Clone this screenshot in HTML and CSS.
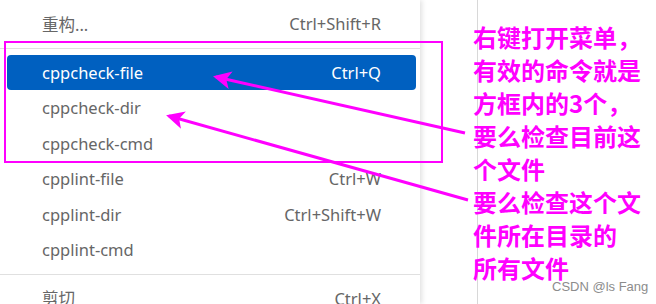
FILE: index.html
```html
<!DOCTYPE html>
<html lang="zh-CN">
<head>
    <meta charset="UTF-8">
    <title>右键菜单</title>
    <link rel="stylesheet" href="styles.css">
</head>
<body>
    <div class="page">
        <div class="menu">
            <div class="item"><span>重构...</span><span class="key">Ctrl+Shift+R</span></div>
            <div class="sep"></div>
            <div class="item active"><span>cppcheck-file</span><span class="key">Ctrl+Q</span></div>
            <div class="item"><span>cppcheck-dir</span></div>
            <div class="item"><span>cppcheck-cmd</span></div>
            <div class="item"><span>cpplint-file</span><span class="key">Ctrl+W</span></div>
            <div class="item"><span>cpplint-dir</span><span class="key">Ctrl+Shift+W</span></div>
            <div class="item"><span>cpplint-cmd</span></div>
            <div class="sep"></div>
            <div class="item"><span>剪切</span><span class="key">Ctrl+X</span></div>
        </div>
        <div class="gutter"></div>
        <div class="editor"></div>
    </div>

    <!-- annotation drawn over the screenshot -->
    <svg class="marks" width="656" height="304" viewBox="0 0 656 304">
        <defs>
            <marker id="head" markerWidth="6" markerHeight="6" refX="5" refY="3" orient="auto" markerUnits="strokeWidth">
                <path d="M0,0 L6,3 L0,6 L1.5,3 Z" fill="#ff00ff"/>
            </marker>
        </defs>
        <rect x="5" y="42" width="437" height="120" fill="none" stroke="#ff00ff" stroke-width="2"/>
        <line x1="465" y1="133" x2="216" y2="77" stroke="#ff00ff" stroke-width="3" marker-end="url(#head)"/>
        <line x1="468" y1="200" x2="169" y2="116" stroke="#ff00ff" stroke-width="3" marker-end="url(#head)"/>
    </svg>
    <div class="note">
        右键打开菜单，<br>
        有效的命令就是<br>
        方框内的3个，<br>
        要么检查目前这<br>
        个文件<br>
        要么检查这个文<br>
        件所在目录的<br>
        所有文件
    </div>
    <div class="watermark">CSDN @ls Fang</div>
</body>
</html>
```

FILE: styles.css
```css
body {
    margin: 0;
    background-color: #fff;
    font-family: "Noto Sans", "Noto Sans CJK SC", sans-serif;
}

.page {
    display: flex;
    height: 304px;
    overflow: hidden;
}

.menu {
    width: 420px;
    flex-shrink: 0;
    padding-top: 6px;
    background-color: #fff;
    box-shadow: 2px 0 5px rgba(0, 0, 0, 0.12);
    position: relative;
    z-index: 1;
}

.item {
    height: 35.5px;
    margin: 0 4px 0 7px;
    padding: 0 35px 0 35px;
    display: flex;
    align-items: center;
    justify-content: space-between;
    font-size: 16.5px;
    color: #666;
    border-radius: 4px;
}

.item.active {
    background-color: #0060c0;
    color: #fff;
}

.sep {
    height: 1px;
    background-color: #e0e0e0;
    margin: 6px 0 6px 0;
}

.gutter {
    width: 57px;
    flex-shrink: 0;
    border-right: 1px solid #d8d8d8;
}

.editor {
    flex: 1;
}

.marks {
    position: absolute;
    left: 0;
    top: 0;
    z-index: 2;
}

.note {
    position: absolute;
    left: 473px;
    top: 20px;
    z-index: 3;
    font-family: "Noto Sans CJK SC", sans-serif;
    font-weight: bold;
    font-size: 24px;
    line-height: 33px;
    color: #ff00ff;
}

.watermark {
    position: absolute;
    left: 552px;
    top: 279px;
    z-index: 3;
    font-family: "Liberation Sans", sans-serif;
    font-size: 13px;
    color: #8c8c8c;
}
```
